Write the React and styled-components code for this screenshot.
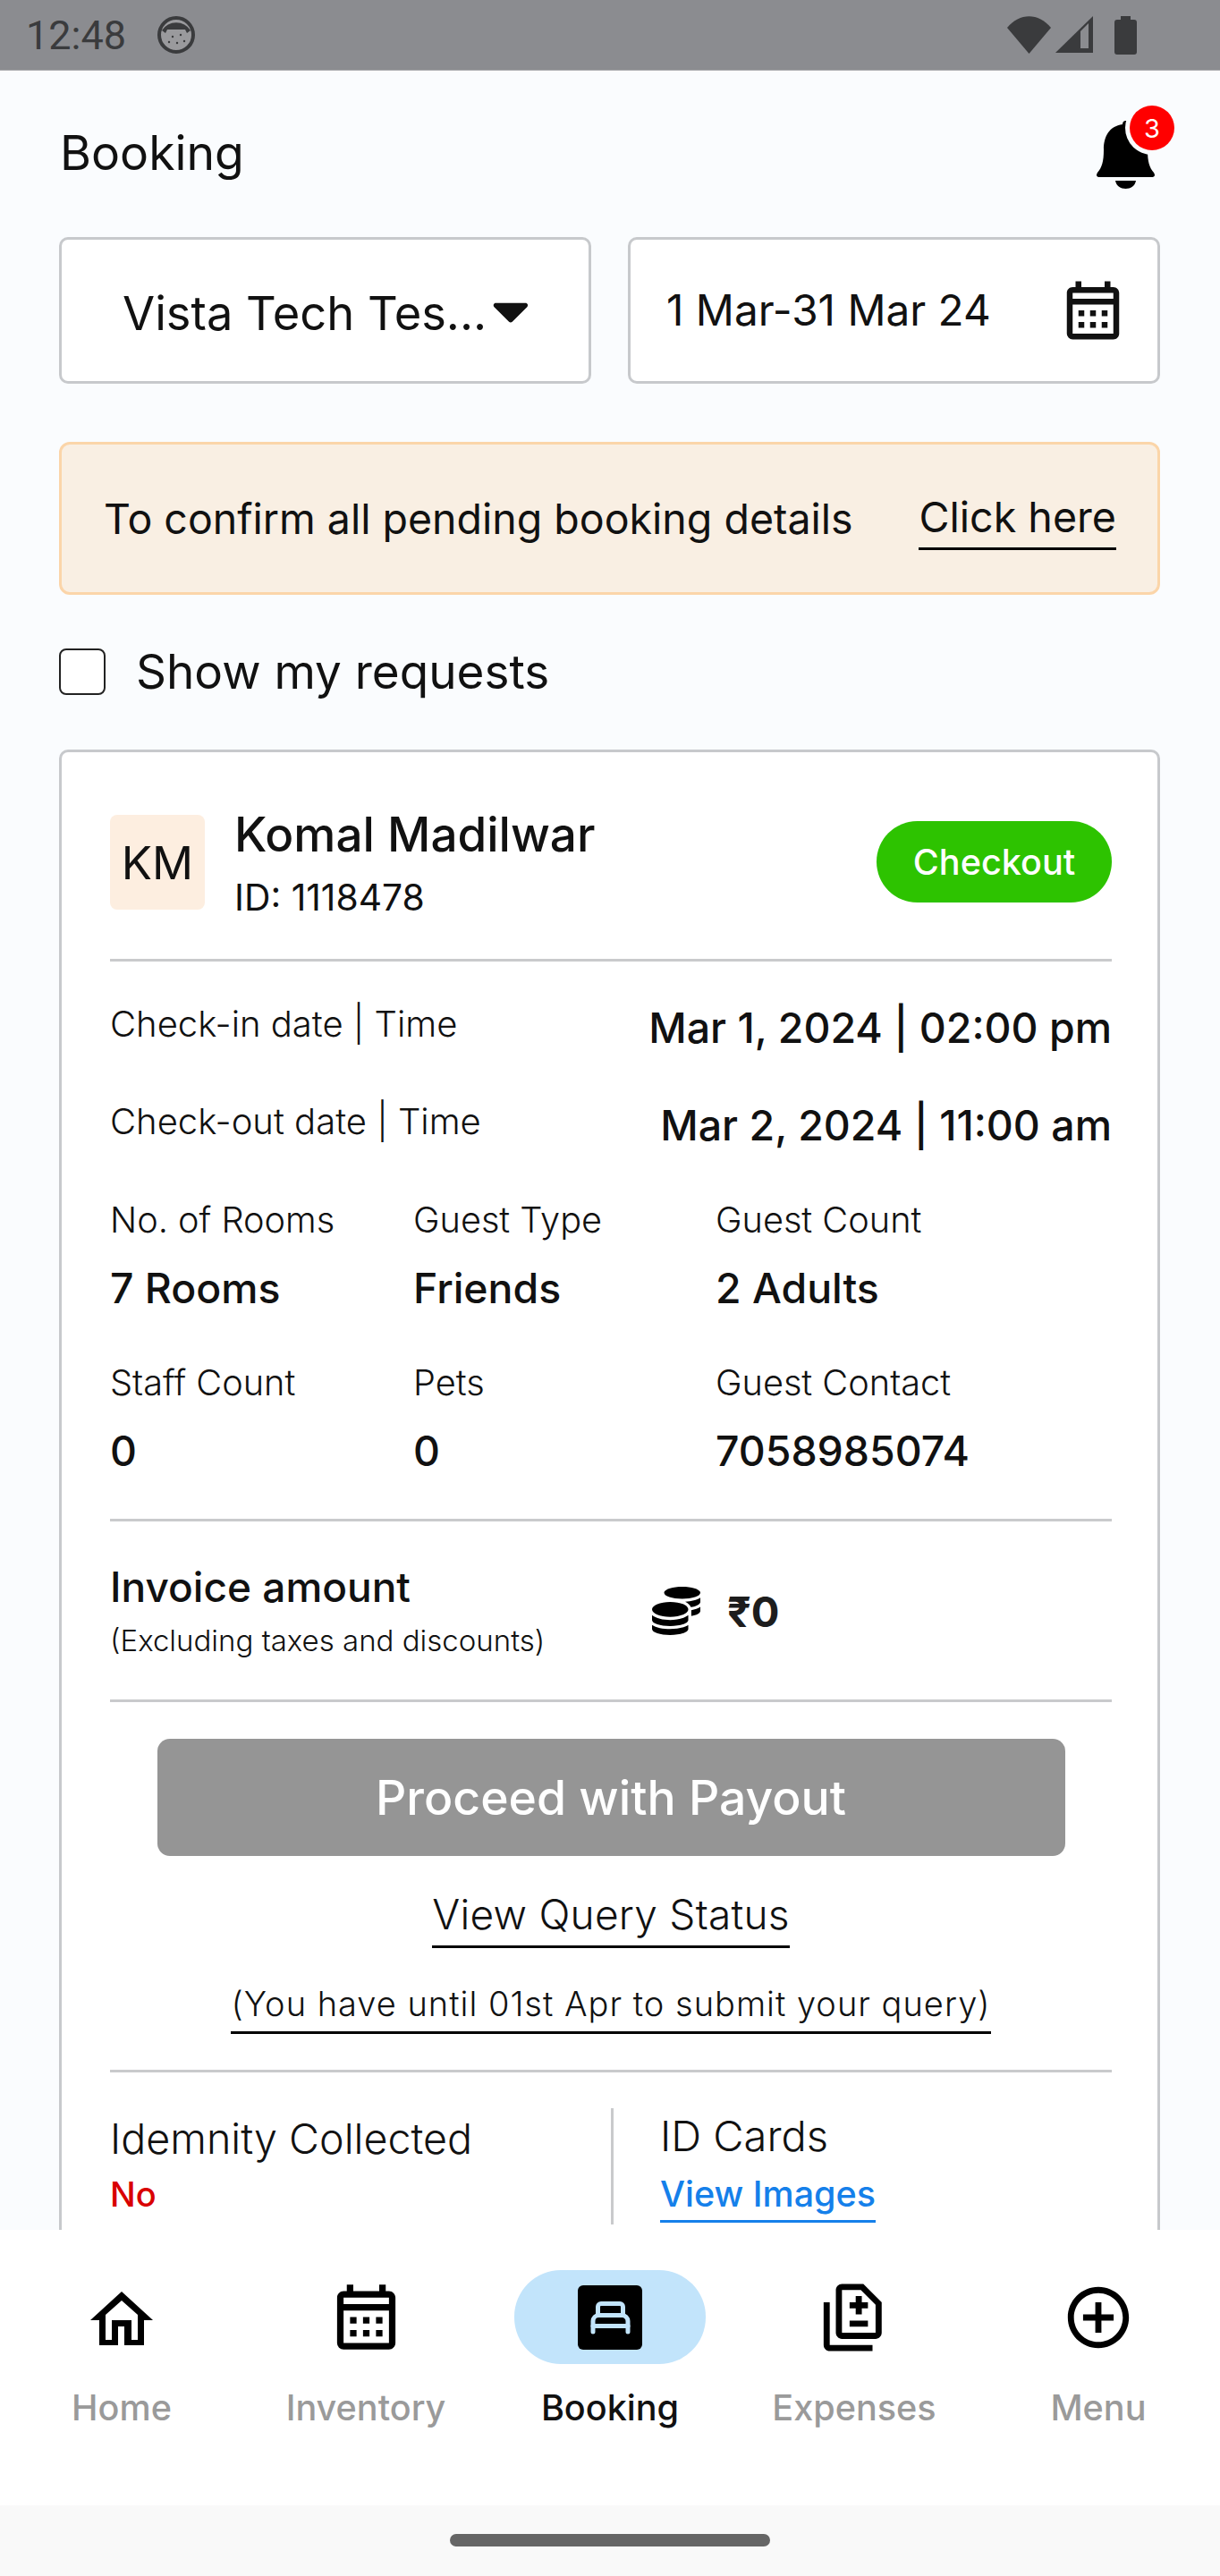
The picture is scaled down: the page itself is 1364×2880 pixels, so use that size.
import React from "react";
import styled, { createGlobalStyle } from "styled-components";
import { FaCoins, FaCaretDown } from "react-icons/fa";
import { MdOutlineCalendarMonth, MdOutlineDifference, MdOutlineAddCircleOutline } from "react-icons/md";

const Global = createGlobalStyle`
  html, body { margin: 0; padding: 0; background: #fafcfe; }
  * { box-sizing: border-box; }
`;
const Screen = styled.div`
  width: 1364px; height: 2880px; display: flex; flex-direction: column; overflow: hidden;
  font-family: Inter, "Liberation Sans", sans-serif; color: #111; background: #fafcfe;
`;
const StatusBar = styled.div`
  height: 79px; flex: none; background: #8b8c90; display: flex; align-items: center;
  padding: 0 93px 0 29px; color: #3a3b3d; border-bottom: 1px solid #a9aaad;
`;
const Clock = styled.span` font-family: Roboto, sans-serif; font-size: 45px; margin-right: 35px; `;
const StatusRight = styled.div` margin-left: auto; display: flex; align-items: center; gap: 5px; `;
const Main = styled.main`
  flex: 1; min-height: 0; overflow: hidden; padding: 0 67px 0 66px; display: flex; flex-direction: column;
`;
const Header = styled.header` height: 186px; flex: none; display: flex; align-items: center; justify-content: space-between; `;
const Title = styled.h1` margin: -3px 0 0 1px; font-size: 53.5px; font-weight: 400; `;
const BellWrap = styled.div` position: relative; width: 65px; height: 78px; margin-right: 6px; display: flex; `;
const Badge = styled.span`
  position: absolute; left: 37px; top: -15px; width: 50px; height: 50px; border-radius: 50%;
  background: #f00; color: #fff; font-size: 29px; display: flex; align-items: center; justify-content: center;
  box-shadow: 0 0 0 5px #fafcfe;
`;
const Filters = styled.div` display: grid; grid-template-columns: 595px 595px; gap: 41px; `;
const FilterBox = styled.div`
  height: 164px; background: #fff; border: 3px solid #c7c9cc; border-radius: 10px; display: flex; align-items: center;
  padding: ${p => p.$pad}; justify-content: space-between;
`;
const FilterText = styled.span` font-size: ${p => p.$size}px; white-space: nowrap; margin-top: ${p => p.$mt}px; `;
const Alert = styled.div`
  margin-top: 65px; height: 171px; flex: none; background: #f9efe3; border: 3px solid #fbd5a9; border-radius: 12px;
  display: flex; align-items: center; justify-content: space-between; padding: 0 46px 0 47px;
`;
const AlertText = styled.span` font-size: 46.5px; `;
const AlertLink = styled.span` font-size: 46.6px; border-bottom: 3px solid #000; padding-bottom: 6px; margin-top: 6px; `;
const CheckRow = styled.label` margin-top: 60px; height: 52px; flex: none; display: flex; align-items: center; gap: 34px; font-size: 53px; `;
const CheckBox = styled.span` width: 52px; height: 52px; border: 2px solid #222; border-radius: 8px; background: #fff; `;
const Card = styled.section`
  margin-top: 61px; flex: 1; background: #fff; border: 3px solid #c7c9cc; border-bottom: 0; border-radius: 10px 10px 0 0;
  padding: 69px 51px 0 54px; display: flex; flex-direction: column; overflow: hidden;
`;
const GuestRow = styled.div` display: flex; align-items: center; height: 108px; flex: none; gap: 33px; `;
const Avatar = styled.div`
  width: 106px; height: 106px; background: #fdeee0; border-radius: 8px; display: flex; align-items: center; justify-content: center; font-size: 51px;
`;
const GuestInfo = styled.div` flex: 1; display: flex; flex-direction: column; gap: 19px; `;
const GuestName = styled.div` font-size: 53px; font-weight: 500; line-height: 58px; `;
const GuestId = styled.div` font-size: 40.8px; font-weight: 400; line-height: 44px; `;
const CheckoutButton = styled.button`
  width: 263px; height: 91px; border: 0; border-radius: 46px; background: #2dc300; color: #fff; font: 500 39.6px Inter, sans-serif; margin-top: -1px;
`;
const Divider = styled.hr` width: 100%; flex: none; height: 3px; border: 0; background: #c9cacc; margin: ${p => p.$m}; `;
const DateRow = styled.div` display: flex; justify-content: space-between; align-items: center; height: 60px; flex: none; margin-bottom: ${p => p.$mb || 0}px; `;
const DateLabel = styled.span` font-size: 40px; font-weight: 300; margin-top: -10px; `;
const DateValue = styled.span` font-size: 46.5px; font-weight: 450; `;
const InfoGrid = styled.div` display: grid; grid-template-columns: 339px 338px 1fr; row-gap: 53px; margin-top: 51px; `;
const InfoLabel = styled.div` font-size: 39.7px; font-weight: 300; line-height: 50px; `;
const InfoValue = styled.div` font-size: 46.4px; font-weight: 450; line-height: 56px; margin-top: 23px; `;
const InvoiceRow = styled.div` display: flex; align-items: center; height: 199px; flex: none; `;
const InvoiceText = styled.div` width: 606px; `;
const InvoiceTitle = styled.div` font-size: 46px; font-weight: 450; line-height: 56px; `;
const InvoiceNote = styled.div` font-size: 33px; font-weight: 300; line-height: 44px; margin-top: 10px; `;
const Amount = styled.div` display: flex; align-items: center; gap: 30px; font-size: 47px; font-weight: 700; color: #1d1d1d; `;
const AmountText = styled.span` margin-top: 2px; `;
const PayoutButton = styled.button`
  align-self: center; margin-top: 41px; width: 1015px; height: 131px; flex: none; background: #959595; color: #fff; border: 0; border-radius: 14px;
  font: 500 53.5px Inter, sans-serif;
`;
const LinkLine = styled.div` align-self: center; margin-top: ${p => p.$mt}px; padding-bottom: ${p => p.$pb}px; font-size: ${p => p.$size}px; font-weight: 300; letter-spacing: ${p => p.$ls}px; border-bottom: 3px solid #000; line-height: ${p => p.$lh}px; white-space: nowrap; `;
const BottomRow = styled.div` display: grid; grid-template-columns: 1fr 1fr; flex: 1; `;
const BottomCol = styled.div` padding: ${p => p.$pt}px 0 0 ${p => p.$pl}px; border-left: ${p => p.$line ? "3px solid #c9cacc" : "0"}; height: 130px; `;
const BottomLabel = styled.div` font-size: ${p => p.$size}px; font-weight: 300; line-height: 60px; `;
const BottomNo = styled.div` font-size: 38px; font-weight: 500; color: #d90000; line-height: 46px; margin-top: 9px; `;
const BottomLink = styled.span` display: inline-block; font-size: 39.5px; font-weight: 500; color: #1580ea; line-height: 46px; margin-top: 12px; border-bottom: 3px solid #1580ea; padding-bottom: 6px; `;
const Nav = styled.nav` height: 308px; flex: none; background: #fff; display: grid; grid-template-columns: repeat(5, 273px); justify-content: center; padding-top: 45px; `;
const NavItem = styled.div` display: flex; flex-direction: column; align-items: center; `;
const NavIcon = styled.div`
  width: 214px; height: 105px; border-radius: 52px; background: ${p => p.$active ? "#c2e4fb" : "transparent"}; color: #000;
  display: flex; align-items: center; justify-content: center;
`;
const NavLabel = styled.span` margin-top: 26px; font-size: 39.6px; font-weight: 500; color: ${p => p.$active ? "#111" : "#9a9a9a"}; line-height: 46px; `;
const SystemBar = styled.div` height: 79px; flex: none; background: #f9f9f9; display: flex; justify-content: center; padding-top: 32px; `;
const HomePill = styled.div` width: 358px; height: 14px; border-radius: 7px; background: #666; `;

const BedSquare = () => (
  <svg width="72" height="72" viewBox="0 0 72 72">
    <rect width="72" height="72" rx="6" fill="#000"/>
    <g fill="none" stroke="#c2e4fb" strokeWidth="5" strokeLinecap="round" strokeLinejoin="round">
      <path d="M22.500 33.500V24a3.500 3.500 0 0 1 3.500-3.500h21a3.500 3.500 0 0 1 3.500 3.500v9.500"/>
      <path d="M17 52V40a6.500 6.500 0 0 1 6.500-6.500h26a6.500 6.500 0 0 1 6.500 6.500v12"/>
      <path d="M17 45.500h39"/>
    </g>
  </svg>
);
const HomeIcon = () => (
  <svg width="70" height="60" viewBox="0 0 70 60" style={{ marginTop: 3 }}>
    <path fillRule="evenodd" fill="#000" d="M0 32 35 0l35 32H60v28H38V39h-7v21H10V32zM35 10 17 26v28h7V32h22v22h7V26z"/>
  </svg>
);
const Bell = () => (
  <svg width="65" height="78" viewBox="0 0 65 78">
    <path fill="#000" d="M32.500 2c-2 0-3.500 1.500-3.500 4C14 8 8 20 8 34c0 14-2 20-7 26-2 3-1 5 3 5h57c4 0 5-2 3-5-5-6-7-12-7-26 0-14-6-26-21-28 0-2.500-1.500-4-3.500-4z"/>
    <path fill="#000" d="M21 69h23c-1 6-6 9-11.500 9S22 75 21 69z"/>
  </svg>
);
const items = [
  ["Home", <HomeIcon />],
  ["Inventory", <MdOutlineCalendarMonth size={87} />],
  ["Booking", <BedSquare />],
  ["Expenses", <MdOutlineDifference size={82} />],
  ["Menu", <MdOutlineAddCircleOutline size={82} />],
];

export default function App() {
  return (
    <Screen>
      <Global />
      <StatusBar>
        <Clock>12:48</Clock>
        <svg width="42" height="42" viewBox="0 0 42 42"><circle cx="21" cy="21" r="19" fill="#9a9a9d" stroke="#3a3b3d" strokeWidth="4"/><path d="M5 16a19 19 0 0 1 32 0l-4 3-2-4H11l-2 4z" fill="#3a3b3d"/><g fill="#3a3b3d"><circle cx="17" cy="23" r="1.200"/><circle cx="26" cy="21" r="1.200"/><circle cx="22" cy="30" r="1.200"/><circle cx="13" cy="29" r="1.200"/><circle cx="30" cy="28" r="1.200"/></g></svg>
        <StatusRight>
          <svg width="49" height="42" viewBox="0 0 49 42"><path d="M24.500 42 0 13C14 -4 35 -4 49 13z" fill="#3a3b3d"/></svg>
          <svg width="42" height="42" viewBox="0 0 42 42"><path d="M42 0v41H0z" fill="#3a3b3d"/><path d="M28 36V17l9-9v28z" fill="#8b8c90"/></svg>
          <svg width="25" height="43" viewBox="0 0 25 43" style={{ marginLeft: 19 }}><path d="M7 0h11v4h4a3 3 0 0 1 3 3v33a3 3 0 0 1-3 3H3a3 3 0 0 1-3-3V7a3 3 0 0 1 3-3h4z" fill="#3a3b3d"/></svg>
        </StatusRight>
      </StatusBar>
      <Main>
        <Header>
          <Title>Booking</Title>
          <BellWrap>
            <Bell />
            <Badge>3</Badge>
          </BellWrap>
        </Header>
        <Filters>
          <FilterBox $pad="0 60px 0 68px">
            <FilterText $size={52.4} $mt={6}>Vista Tech Tes...</FilterText>
            <FaCaretDown size={66} />
          </FilterBox>
          <FilterBox $pad="0 33px 0 40px">
            <FilterText $size={47.7} $mt={0}>1 Mar-31 Mar 24</FilterText>
            <MdOutlineCalendarMonth size={78} />
          </FilterBox>
        </Filters>
        <Alert>
          <AlertText>To confirm all pending booking details</AlertText>
          <AlertLink>Click here</AlertLink>
        </Alert>
        <CheckRow><CheckBox />Show my requests</CheckRow>
        <Card>
          <GuestRow>
            <Avatar>KM</Avatar>
            <GuestInfo>
              <GuestName>Komal Madilwar</GuestName>
              <GuestId>ID: 1118478</GuestId>
            </GuestInfo>
            <CheckoutButton>Checkout</CheckoutButton>
          </GuestRow>
          <Divider $m="54px 0 44px" />
          <DateRow $mb={49}><DateLabel>Check-in date | Time</DateLabel><DateValue>Mar 1, 2024 | 02:00 pm</DateValue></DateRow>
          <DateRow><DateLabel>Check-out date | Time</DateLabel><DateValue>Mar 2, 2024 | 11:00 am</DateValue></DateRow>
          <InfoGrid>
            <div><InfoLabel>No. of Rooms</InfoLabel><InfoValue>7 Rooms</InfoValue></div>
            <div><InfoLabel>Guest Type</InfoLabel><InfoValue>Friends</InfoValue></div>
            <div><InfoLabel>Guest Count</InfoLabel><InfoValue>2 Adults</InfoValue></div>
            <div><InfoLabel>Staff Count</InfoLabel><InfoValue>0</InfoValue></div>
            <div><InfoLabel>Pets</InfoLabel><InfoValue>0</InfoValue></div>
            <div><InfoLabel>Guest Contact</InfoLabel><InfoValue>7058985074</InfoValue></div>
          </InfoGrid>
          <Divider $m="48px 0 0" />
          <InvoiceRow>
            <InvoiceText>
              <InvoiceTitle>Invoice amount</InvoiceTitle>
              <InvoiceNote>(Excluding taxes and discounts)</InvoiceNote>
            </InvoiceText>
            <Amount><FaCoins size={54} color="#000" /><AmountText>₹0</AmountText></Amount>
          </InvoiceRow>
          <Divider $m="0" />
          <PayoutButton>Proceed with Payout</PayoutButton>
          <LinkLine $mt={34} $size={46} $lh={63} $pb={3} $ls={0.25}>View Query Status</LinkLine>
          <LinkLine $mt={31} $size={38} $lh={62} $pb={0} $ls={1}>(You have until 01st Apr to submit your query)</LinkLine>
          <Divider $m="40px 0 40px" />
          <BottomRow>
            <BottomCol $pl={0} $pt={4}><BottomLabel $size={46.6}>Idemnity Collected</BottomLabel><BottomNo>No</BottomNo></BottomCol>
            <BottomCol $pl={52} $pt={1} $line><BottomLabel $size={47}>ID Cards</BottomLabel><BottomLink>View Images</BottomLink></BottomCol>
          </BottomRow>
        </Card>
      </Main>
      <Nav>
        {items.map(([label, icon]) => (
          <NavItem key={label}>
            <NavIcon $active={label === "Booking"}>{icon}</NavIcon>
            <NavLabel $active={label === "Booking"}>{label}</NavLabel>
          </NavItem>
        ))}
      </Nav>
      <SystemBar><HomePill /></SystemBar>
    </Screen>
  );
}
